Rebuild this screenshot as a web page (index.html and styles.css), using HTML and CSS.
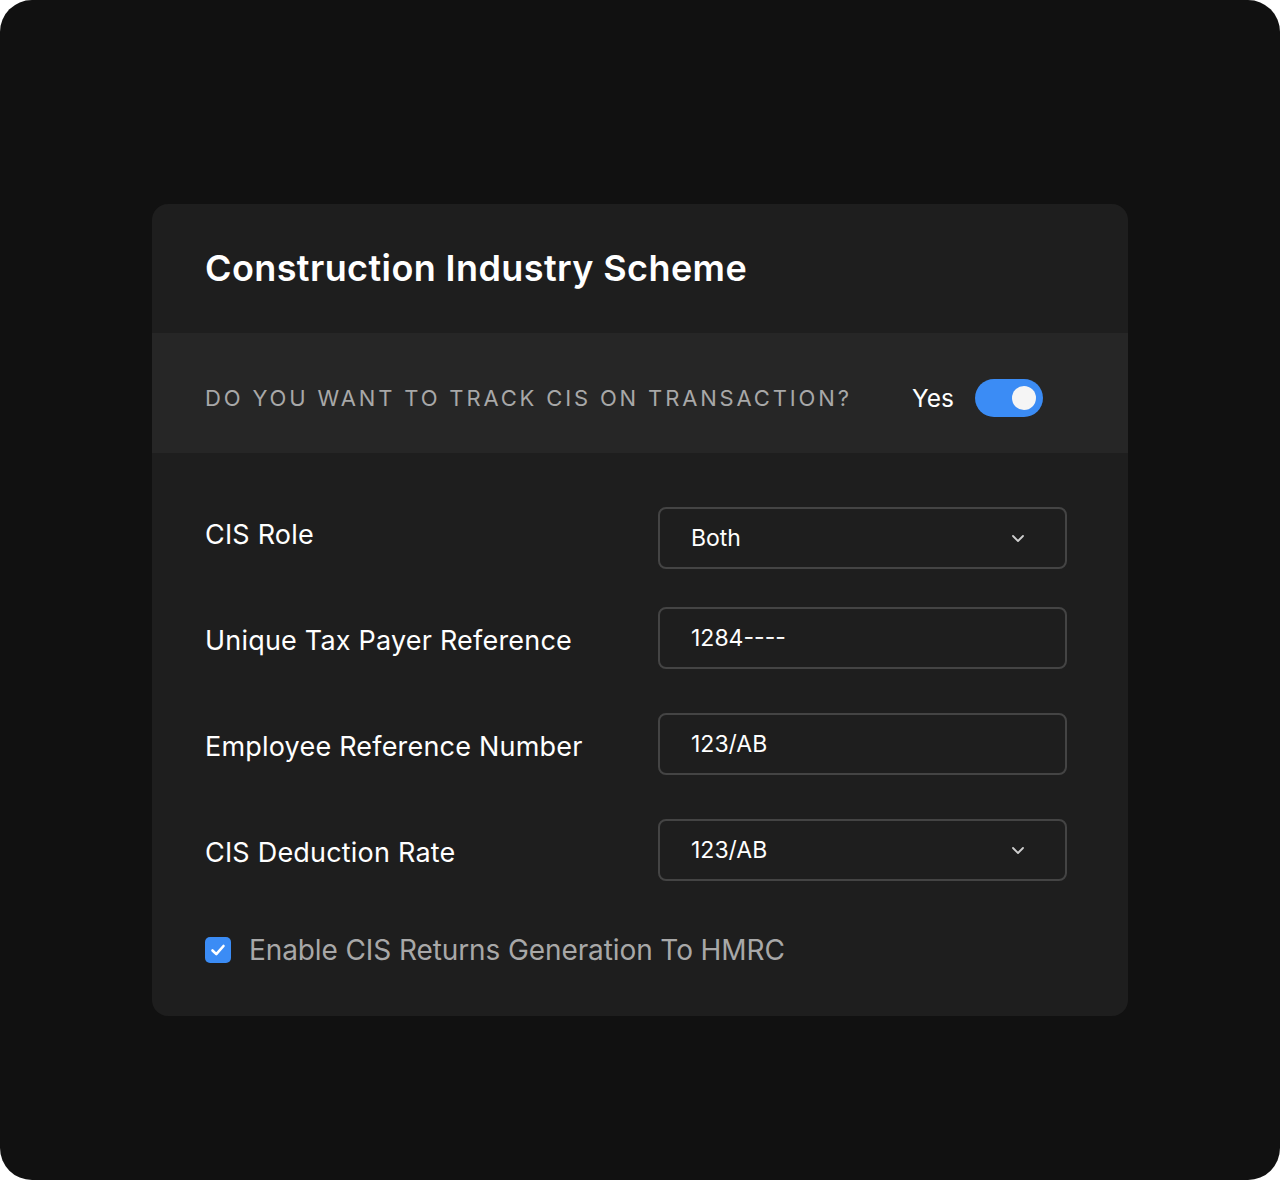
FILE: index.html
```html
<!DOCTYPE html>
<html>
<head>
<meta charset="utf-8">
<link rel="stylesheet" href="styles.css">
</head>
<body>
<div class="frame">
  <div class="card">
    <h1 class="title">Construction Industry Scheme</h1>
    <div class="track">
      <span class="track-q">DO YOU WANT TO TRACK CIS ON TRANSACTION?</span>
      <span class="track-yes">Yes</span>
      <span class="toggle"><span class="knob"></span></span>
    </div>
    <div class="form">
      <div class="row row-first">
        <span class="label">CIS Role</span>
        <div class="field">
          <span class="value">Both</span>
          <svg class="chev" width="14" height="9" viewBox="0 0 14 9"><path d="M2 2l5 5 5-5" fill="none" stroke="#cfcfcf" stroke-width="1.8" stroke-linecap="round" stroke-linejoin="round"/></svg>
        </div>
      </div>
      <div class="row">
        <span class="label">Unique Tax Payer Reference</span>
        <div class="field"><span class="value">1284----</span></div>
      </div>
      <div class="row">
        <span class="label">Employee Reference Number</span>
        <div class="field"><span class="value">123/AB</span></div>
      </div>
      <div class="row row-last">
        <span class="label">CIS Deduction Rate</span>
        <div class="field">
          <span class="value">123/AB</span>
          <svg class="chev" width="14" height="9" viewBox="0 0 14 9"><path d="M2 2l5 5 5-5" fill="none" stroke="#cfcfcf" stroke-width="1.8" stroke-linecap="round" stroke-linejoin="round"/></svg>
        </div>
      </div>
      <div class="check-row">
        <span class="checkbox"><svg width="16" height="14" viewBox="0 0 16 14"><path d="M2.5 7.5l3.8 3.6L13.5 3" fill="none" stroke="#fff" stroke-width="2.6" stroke-linecap="round" stroke-linejoin="round"/></svg></span>
        <span class="check-label">Enable CIS Returns Generation To HMRC</span>
      </div>
    </div>
  </div>
</div>
</body>
</html>
```

FILE: styles.css
```css
html, body {
  margin: 0;
  padding: 0;
  background: #ffffff;
}
body {
  font-family: "Inter", "Lato", sans-serif;
}
.frame {
  width: 1280px;
  height: 1180px;
  background: #111111;
  border-radius: 32px;
  box-sizing: border-box;
  padding-top: 204px;
  padding-left: 152px;
}
.card {
  width: 976px;
  height: 812px;
  background: #1e1e1e;
  border-radius: 16px;
  overflow: hidden;
}
.title {
  margin: 0;
  height: 129px;
  box-sizing: border-box;
  padding: 44px 0 0 53px;
  font-size: 36px;
  font-weight: 600;
  color: #ffffff;
  letter-spacing: 0.4px;
  line-height: 40px;
}
.track {
  height: 120px;
  box-sizing: border-box;
  padding: 10px 0 0 53px;
  background: #262626;
  display: flex;
  align-items: center;
}
.track-q {
  font-size: 22px;
  color: #a8a8a8;
  letter-spacing: 2.85px;
  width: 707px;
  white-space: nowrap;
}
.track-yes {
  font-size: 24.5px;
  color: #ffffff;
  margin-right: 21px;
}
.toggle {
  width: 68px;
  height: 38px;
  border-radius: 19px;
  background: #3b8cf5;
  position: relative;
}
.knob {
  position: absolute;
  right: 7px;
  top: 7px;
  width: 24px;
  height: 24px;
  border-radius: 50%;
  background: #f5f5f5;
}
.form {
  display: flex;
  flex-direction: column;
  padding: 54px 60px 0 53px;
}
.row {
  display: flex;
  align-items: center;
  height: 62px;
  margin-bottom: 44px;
}
.row-first {
  margin-bottom: 38px;
}
.row-last {
  margin-bottom: 0;
}
.label {
  width: 453px;
  font-size: 27px;
  letter-spacing: 0.2px;
  color: #ffffff;
  margin-top: 5px;
}
.row-first .label {
  margin-top: 0;
  margin-bottom: 7px;
}
.field {
  width: 409px;
  height: 62px;
  box-sizing: border-box;
  border: 2px solid #444444;
  border-radius: 8px;
  display: flex;
  align-items: center;
  padding: 0 40px 0 31px;
}
.value {
  flex: 1;
  font-size: 23px;
  color: #ffffff;
}
.chev {
  display: block;
}
.check-row {
  display: flex;
  align-items: center;
  margin-top: 52px;
}
.checkbox {
  width: 26px;
  height: 26px;
  border-radius: 5px;
  background: #3b8cf5;
  display: flex;
  align-items: center;
  justify-content: center;
  margin-right: 18px;
}
.check-label {
  font-size: 28px;
  letter-spacing: -0.1px;
  color: #a8a8a8;
}
```
